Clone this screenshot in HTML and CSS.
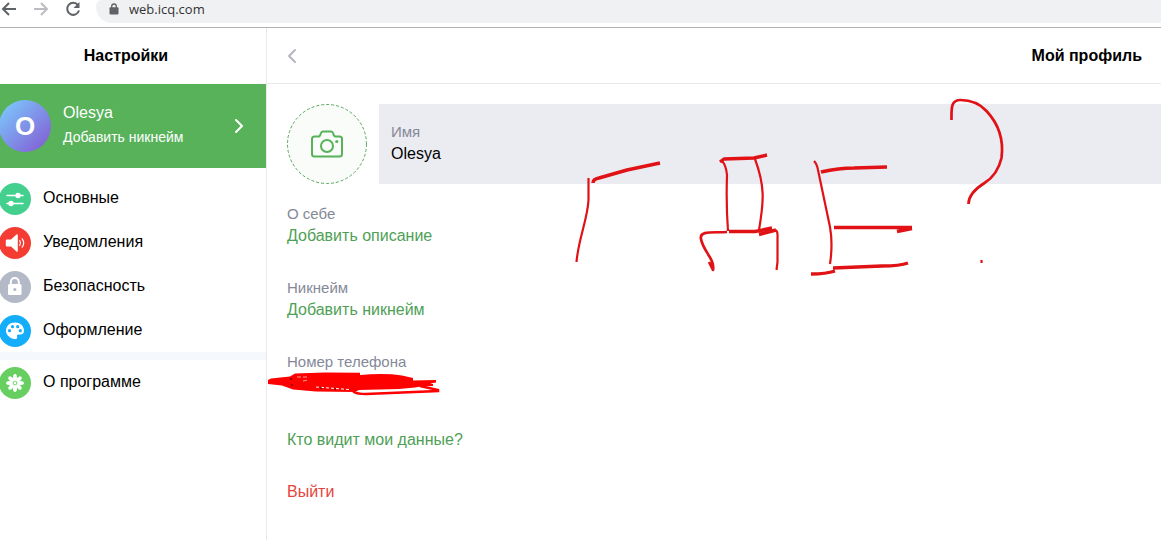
FILE: index.html
```html
<!DOCTYPE html>
<html lang="ru">
<head>
  <meta charset="UTF-8">
  <meta name="viewport" content="width=device-width, initial-scale=1.0">
  <title>Мой профиль</title>
  <link rel="stylesheet" href="styles.css">
</head>
<body>

  <!-- Browser toolbar -->
  <header class="toolbar">
    <button class="tool-btn" aria-label="Назад">
      <svg width="18" height="18" viewBox="0 0 18 18"><path d="M16 9H3M9 3L3 9l6 6"/></svg>
    </button>
    <button class="tool-btn" aria-label="Вперёд" disabled>
      <svg width="18" height="18" viewBox="0 0 18 18"><path d="M2 9h13M9 3l6 6-6 6"/></svg>
    </button>
    <button class="tool-btn" aria-label="Обновить">
      <svg width="18" height="18" viewBox="0 0 18 18"><path d="M14 5.200A6 6 0 1 0 15 10.500"/><path class="solid" d="M15.500 2v6h-6z"/></svg>
    </button>
    <div class="address">
      <svg width="10" height="12" viewBox="0 0 10 12"><path d="M2.700 5V3.300a2.300 2.300 0 0 1 4.600 0V5" fill="none" stroke="#5f6368" stroke-width="1.300"/><rect x="0.500" y="4.300" width="9" height="7.200" rx="1" fill="#5f6368"/></svg>
      <input type="text" value="web.icq.com" aria-label="Адрес">
    </div>
  </header>

  <div class="app">
    <!-- Settings sidebar -->
    <aside class="sidebar">
      <h2 class="sidebar-title">Настройки</h2>

      <a href="#profile" class="profile-card">
        <span class="avatar">O</span>
        <span class="profile-text">
          <span class="profile-name">Olesya</span>
          <span class="profile-nick">Добавить никнейм</span>
        </span>
        <svg class="arrow" width="10" height="16" viewBox="0 0 10 16"><path d="M2 2l6 6-6 6"/></svg>
      </a>

      <nav class="menu">
        <a href="#general">
          <svg width="32" height="32" viewBox="0 0 32 32">
            <circle cx="16" cy="16" r="16" fill="#43d08f"/>
            <path d="M8 12.500h16M8 20.500h16" stroke="#fff" stroke-width="1.500" stroke-linecap="round"/>
            <circle cx="19" cy="12.500" r="2.700" fill="#fff"/><circle cx="12" cy="20.500" r="2.700" fill="#fff"/>
          </svg>
          Основные
        </a>
        <a href="#notifications">
          <svg width="32" height="32" viewBox="0 0 32 32">
            <circle cx="16" cy="16" r="16" fill="#f43c32"/>
            <path d="M8 12.500h4l5.500-5q1.300-.8 1.300.8v15.400q0 1.600-1.300.8l-5.500-5H8q-1.200 0-1.200-1.200v-4.600q0-1.200 1.200-1.200z" fill="#fff"/>
            <path d="M20.700 13.500q1.500 2.500 0 5M23.200 11.800q3 4.200 0 8.400" fill="none" stroke="#fff" stroke-width="1.200" stroke-linecap="round"/>
          </svg>
          Уведомления
        </a>
        <a href="#security">
          <svg width="32" height="32" viewBox="0 0 32 32">
            <circle cx="16" cy="16" r="16" fill="#b4b9c8"/>
            <path d="M11.800 14v-3a4 4 0 0 1 8 0v3" fill="none" stroke="#fff" stroke-width="2"/>
            <rect x="9" y="13" width="13.500" height="11" rx="1.500" fill="#fff"/>
            <circle cx="15.800" cy="18.500" r="1.600" fill="#b4b9c8"/>
          </svg>
          Безопасность
        </a>
        <a href="#appearance">
          <svg width="32" height="32" viewBox="0 0 32 32">
            <circle cx="16" cy="16" r="16" fill="#14adfa"/>
            <path d="M16 7.500c-5 0-9 3.500-9 8.200 0 4.200 3.800 7.300 7.800 8.300 2 .5 4-.2 3.300-2-.7-2 .3-2.800 2.400-2.500 2.800.4 4.500-1 4.500-3.800 0-4.700-4-8.200-9-8.200z" fill="#fff"/>
            <g fill="#14adfa"><circle cx="13.500" cy="11.700" r="1.600"/><circle cx="18.700" cy="11.700" r="1.600"/><circle cx="10.500" cy="15.700" r="1.600"/><circle cx="21.300" cy="15.700" r="1.600"/></g>
          </svg>
          Оформление
        </a>
      </nav>

      <nav class="menu menu-about">
        <a href="#about">
          <svg width="32" height="32" viewBox="0 0 32 32">
            <circle cx="16" cy="16" r="16" fill="#67ce60"/>
            <g fill="#fff">
              <ellipse cx="16" cy="10.500" rx="2" ry="3.400"/>
              <ellipse cx="16" cy="10.500" rx="2" ry="3.400" transform="rotate(45 16 16)"/>
              <ellipse cx="16" cy="10.500" rx="2" ry="3.400" transform="rotate(90 16 16)"/>
              <ellipse cx="16" cy="10.500" rx="2" ry="3.400" transform="rotate(135 16 16)"/>
              <ellipse cx="16" cy="10.500" rx="2" ry="3.400" transform="rotate(180 16 16)"/>
              <ellipse cx="16" cy="10.500" rx="2" ry="3.400" transform="rotate(225 16 16)"/>
              <ellipse cx="16" cy="10.500" rx="2" ry="3.400" transform="rotate(270 16 16)"/>
              <ellipse cx="16" cy="10.500" rx="2" ry="3.400" transform="rotate(315 16 16)"/>
              <circle cx="16" cy="16" r="1.400"/>
            </g>
          </svg>
          О программе
        </a>
      </nav>
    </aside>

    <!-- Profile -->
    <main class="content">
      <div class="content-header">
        <button class="back-btn" aria-label="Назад к настройкам">
          <svg width="10" height="16" viewBox="0 0 10 16"><path d="M8 2L2 8l6 6"/></svg>
        </button>
        <h1>Мой профиль</h1>
      </div>

      <div class="profile">
        <div class="name-row">
          <button class="photo-btn" aria-label="Загрузить фото">
            <svg class="photo-ring" width="80" height="80" viewBox="0 0 80 80"><circle cx="40" cy="40" r="39.500"/></svg>
            <svg class="camera" width="32" height="28" viewBox="0 0 32 28">
              <path d="M3.500 6.500h4q1 0 1.500-1l1-2.500q.6-1.500 2-1.500h8q1.400 0 2 1.500l1 2.500q.5 1 1.500 1h4q2.500 0 2.500 2.500v15q0 2.500-2.500 2.500h-25Q1 26.500 1 24V9q0-2.500 2.500-2.500z"/>
              <circle cx="16" cy="16" r="6"/>
              <circle class="dot" cx="25.800" cy="11.500" r="1.600"/>
            </svg>
          </button>
          <div class="name-field">
            <label for="name">Имя</label>
            <input type="text" id="name" value="Olesya">
          </div>
        </div>

        <div class="field">
          <span class="field-label">О себе</span>
          <button>Добавить описание</button>
        </div>
        <div class="field">
          <span class="field-label">Никнейм</span>
          <button>Добавить никнейм</button>
        </div>
        <div class="field">
          <span class="field-label">Номер телефона</span>
        </div>

        <div class="links">
          <a href="#privacy">Кто видит мои данные?</a>
          <a href="#logout" class="logout">Выйти</a>
        </div>
      </div>
    </main>
  </div>

  <!-- Pen marks over the page -->
  <svg class="marks" width="1010" height="400" viewBox="0 0 1010 400" aria-hidden="true">
    <g class="bright">
      <path class="fill" d="M268 380l3-1.500 19-2 5-3 30-1 35 .2v2.300q25-2 42 .5l11 2.500v2.500l23-.5v2.500l-6 1 3 .5v2l-12 .5-6 1-16 1.500-40 1-4 2-39-.5-23-2-11-4-14-1.500z"/>
      <path d="M354 388v4q3 2 12 2l72-3v-1l-18-4" stroke="#fe0000" stroke-width="2.500"/>
      <path d="M316 387l33 2.500" stroke="#fff" stroke-width="1" stroke-dasharray="3 2"/>
      <path d="M297 377h12M303 381l5-1" stroke="#ffa39c" stroke-width="1" stroke-dasharray="4 2"/>
      <path d="M290 379h2M291 385h2M320 388h2M334 389h2" stroke="#400" stroke-width="1"/>
    </g>
    <g class="pen">
      <path class="thin" d="M588.500 178v22c-1 20-10 38-12 62"/>
      <path d="M593 183q0-4 6-5l28-8 33-7"/>
      <path d="M720 162l4-3 30-1 13-3"/>
      <path class="thin" d="M722 161q4 4 5 14-1 30 1 56M755 159c10 27 9 42 4 71"/>
      <path class="medium" d="M727 232c-13 1-28-2-26 7 2 12 14 20 12 31l-4-8"/>
      <path d="M729 231.500h26l17-3.500M759 234.500l17-4.500"/>
      <path class="thin" d="M776 230q2 2 1.500 8v24l-1 8"/>
      <path class="thin" d="M814 161q3 3 4 9l12 57q3 17 0 37"/>
      <path d="M821 172q18-4 33-4l33-1M834 227.500h78M897 231.500l15-3M833 268l49-2q18 0 26-3M811 274q15 0 24-3"/>
      <path class="medium" d="M951.500 120c0-11-1-20 9-20q16 0 26 11c14 15 17 32 15 47q-4 17-17 25-16 10-16 21"/>
      <path class="thin" d="M981.500 260v3"/>
    </g>
  </svg>

</body>
</html>
```
FILE: styles.css
```css
* {
  box-sizing: border-box;
}

body {
  margin: 0;
  min-height: 100vh;
  display: flex;
  flex-direction: column;
  position: relative;
  overflow: hidden;
  background-color: #fff;
  color: #000;
  font-family: "Liberation Sans", Arial, sans-serif;
  font-size: 16px;
  line-height: 24px;
}

button,
input {
  padding: 0;
  border: none;
  outline: none;
  background: none;
  color: inherit;
  font: inherit;
}

button {
  cursor: pointer;
}

a {
  color: inherit;
  text-decoration: none;
}

/* Browser toolbar */
.toolbar {
  display: flex;
  align-items: flex-start;
  gap: 14px;
  height: 28px;
  overflow: hidden;
  border-bottom: 1px solid #b0b1b3;
}

.tool-btn {
  display: flex;
  width: 18px;
  height: 18px;
}

.tool-btn svg {
  fill: none;
  stroke: #5f6368;
  stroke-width: 2;
}

.tool-btn .solid {
  fill: #5f6368;
  stroke: none;
}

.tool-btn:disabled svg {
  stroke: #bbbdc0;
}

.address {
  flex: 1;
  display: flex;
  align-items: center;
  gap: 10px;
  height: 23px;
  padding: 0 0 6px 13px;
  background-color: #f0f1f3;
  border-radius: 6px 0 0 16px;
}

.address input {
  flex: 1;
  color: #333;
  font-family: "Open Sans", sans-serif;
  font-size: 13px;
  line-height: 18px;
}

.app {
  flex: 1;
  display: flex;
}

/* Sidebar */
.sidebar {
  width: 267px;
  flex-shrink: 0;
  border-right: 1px solid #e8e9ec;
}

.sidebar-title {
  margin: 0;
  padding: 16px 14px 16px 0;
  font-size: 16px;
  text-align: center;
}

.profile-card {
  display: flex;
  align-items: center;
  gap: 12px;
  padding: 16px 22px 16px 0;
  background-color: #57b25a;
  color: #fff;
}

.avatar {
  width: 52px;
  height: 52px;
  margin-left: -1px;
  border-radius: 50%;
  background: linear-gradient(135deg, #7cc4fb 10%, #8262d6 90%);
  font-size: 26px;
  font-weight: bold;
  line-height: 52px;
  text-align: center;
}

.profile-text {
  flex: 1;
  display: flex;
  flex-direction: column;
  padding-bottom: 3px;
}

.profile-nick {
  font-size: 14px;
}

.arrow,
.back-btn svg {
  fill: none;
  stroke: #fff;
  stroke-width: 2;
  stroke-linecap: round;
  stroke-linejoin: round;
}

.menu {
  padding-top: 8px;
}

.menu a {
  display: flex;
  align-items: center;
  gap: 12px;
  height: 44px;
}

.menu svg {
  margin: 2px 0 0 -1px;
}

.menu-about {
  padding-top: 0;
  border-top: 8px solid #f5f9fe;
}

/* Profile page */
.content {
  flex: 1;
  min-width: 0;
}

.content-header {
  display: flex;
  align-items: center;
  justify-content: space-between;
  height: 56px;
  padding: 0 19px 0 20px;
  border-bottom: 1px solid #e8e9ec;
}

.content-header h1 {
  margin: 0;
  font-size: 16px;
}

.back-btn {
  display: flex;
}

.back-btn svg {
  stroke: #b4b7bd;
}

.profile {
  padding: 20px 0 20px 20px;
}

.name-row {
  display: flex;
  gap: 12px;
  margin-bottom: 20px;
}

.photo-btn {
  display: grid;
  place-items: center;
  width: 80px;
  height: 80px;
}

.photo-btn svg {
  grid-area: 1 / 1;
}

.photo-ring {
  fill: #f9fcf9;
  stroke: #57a95b;
  stroke-dasharray: 3 2;
}

.camera {
  fill: none;
  stroke: #57b25a;
  stroke-width: 2;
}

.camera .dot {
  fill: #57b25a;
  stroke: none;
}

.name-field {
  flex: 1;
  display: flex;
  flex-direction: column;
  justify-content: center;
  padding: 0 12px;
  background-color: #ebecf2;
}

.name-field label,
.field-label {
  color: #858997;
  font-size: 15px;
  line-height: 20px;
}

.name-field input {
  height: 24px;
}

.field {
  display: flex;
  flex-direction: column;
  align-items: flex-start;
  min-height: 44px;
  margin-bottom: 30px;
}

.field button,
.links a {
  color: #4f9f56;
}

.links {
  display: flex;
  flex-direction: column;
  align-items: flex-start;
  gap: 28px;
  padding-top: 2px;
}

.links .logout {
  color: #e5443c;
}

/* Pen marks */
.marks {
  position: absolute;
  top: 0;
  left: 0;
  fill: none;
  pointer-events: none;
}

.bright .fill {
  fill: #fe0000;
}

.pen {
  stroke: #e01216;
  stroke-width: 3.4;
  stroke-linejoin: round;
}

.pen .medium {
  stroke-width: 2.7;
}

.pen .thin {
  stroke-width: 2.2;
}
```
